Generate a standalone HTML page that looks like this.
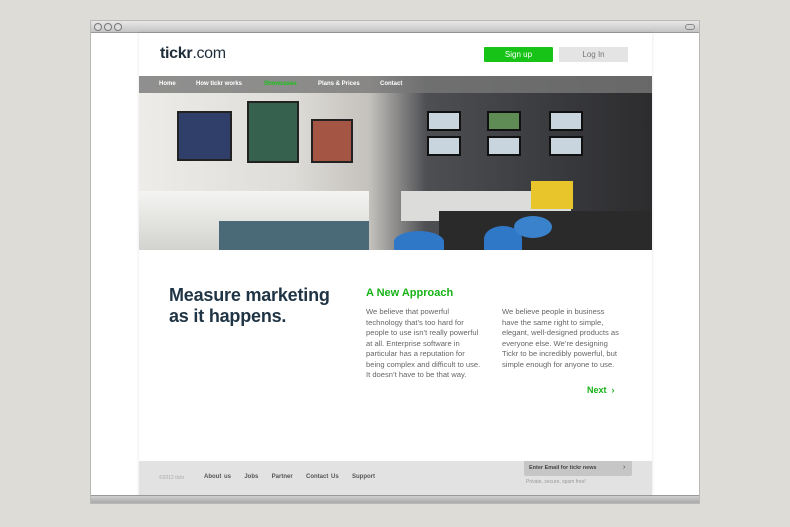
<!DOCTYPE html>
<html><head><meta charset="utf-8"><style>
*{margin:0;padding:0;box-sizing:border-box}
body{width:790px;height:527px;background:#dddcd7;position:relative;overflow:hidden;font-family:"Liberation Sans",sans-serif}
.win{position:absolute;left:90px;top:20px;width:610px;height:484px;background:#fff;border:1px solid #b8b8b4}
.title{position:absolute;left:0;top:0;width:608px;height:12px;background:linear-gradient(#e8e8e8,#c4c4c4);border-bottom:1px solid #9a9a9a}
.dot{position:absolute;top:2px;width:8px;height:8px;border-radius:50%;border:1px solid #777;background:#ddd}
.page{position:absolute;left:48px;top:12px;width:513px;height:463px;background:#fff;box-shadow:0 0 3px rgba(0,0,0,.12)}
.bottom{position:absolute;left:0;top:474px;width:608px;height:8px;background:linear-gradient(#d0d0d0,#a9a9a9);border-top:1px solid #999}
.a{position:absolute;white-space:nowrap}
</style></head><body>
<div class="win">
<div class="title"><div class="dot" style="left:3px"></div><div class="dot" style="left:13px"></div><div class="dot" style="left:23px"></div><div style="position:absolute;right:4px;top:3px;width:10px;height:6px;border:1px solid #888;border-radius:3px"></div></div>
<div class="page">
<div class="a" style="left:21px;top:12px;font-size:16px;color:#1f2d3a;letter-spacing:-.3px"><b>tickr</b>.com</div>
<div class="a" style="left:345px;top:14px;width:69px;height:15px;background:#17c317;color:#fff;font-size:8px;text-align:center;line-height:15px;border-radius:1px">Sign up</div>
<div class="a" style="left:420px;top:14px;width:69px;height:15px;background:#e4e4e4;color:#777;font-size:8px;text-align:center;line-height:15px">Log In</div>
<div class="a" style="left:0;top:43px;width:513px;height:174px;overflow:hidden;background:linear-gradient(90deg,#eeece9 0%,#dedcd8 30%,#c4c1bc 45%,#4e4f53 56%,#3a3b3f 80%,#2c2c2e 100%)">
 <div class="a" style="left:0;top:115px;width:230px;height:60px;background:linear-gradient(#f4f4f2,#d2d2cf)"></div>
 <div class="a" style="left:80px;top:145px;width:150px;height:30px;background:#4b6a78"></div>
 <div class="a" style="left:38px;top:35px;width:55px;height:50px;background:#2f3f6a;border:2px solid #222"></div>
 <div class="a" style="left:108px;top:25px;width:52px;height:62px;background:#36614f;border:2px solid #222"></div>
 <div class="a" style="left:172px;top:43px;width:42px;height:44px;background:#a55544;border:2px solid #222"></div>
 <div class="a" style="left:262px;top:115px;width:170px;height:30px;background:#dcdcda"></div>
 <div class="a" style="left:288px;top:35px;width:34px;height:20px;background:#c8d4de;border:2px solid #111"></div>
 <div class="a" style="left:348px;top:35px;width:34px;height:20px;background:#5f8b55;border:2px solid #111"></div>
 <div class="a" style="left:410px;top:35px;width:34px;height:20px;background:#c8d4de;border:2px solid #111"></div>
 <div class="a" style="left:288px;top:60px;width:34px;height:20px;background:#c8d4de;border:2px solid #111"></div>
 <div class="a" style="left:348px;top:60px;width:34px;height:20px;background:#c8d4de;border:2px solid #111"></div>
 <div class="a" style="left:410px;top:60px;width:34px;height:20px;background:#c8d4de;border:2px solid #111"></div>
 <div class="a" style="left:300px;top:135px;width:213px;height:40px;background:#2a2a2b"></div>
 <div class="a" style="left:392px;top:105px;width:42px;height:28px;background:#e8c52a"></div>
 <div class="a" style="left:255px;top:155px;width:50px;height:22px;background:#2f78c8;border-radius:50% 50% 0 0"></div>
 <div class="a" style="left:345px;top:150px;width:38px;height:26px;background:#2f78c8;border-radius:50% 50% 0 0"></div>
 <div class="a" style="left:375px;top:140px;width:38px;height:22px;background:#3a82cc;border-radius:50%"></div>
 <div class="a" style="left:0;top:0;width:513px;height:17px;background:rgba(120,120,120,.8)"></div>
 <div class="a" style="left:20px;top:5px;font-size:6px;color:#fff;font-weight:bold">Home</div>
 <div class="a" style="left:57px;top:5px;font-size:6px;color:#fff;font-weight:bold">How tickr works</div>
 <div class="a" style="left:125px;top:5px;font-size:6px;color:#17c317;font-weight:bold">Showcases</div>
 <div class="a" style="left:179px;top:5px;font-size:6px;color:#fff;font-weight:bold">Plans &amp; Prices</div>
 <div class="a" style="left:241px;top:5px;font-size:6px;color:#fff;font-weight:bold">Contact</div>
</div>
<div class="a" style="left:30px;top:252px;font-size:18px;line-height:21px;color:#1f3444;font-weight:bold;letter-spacing:-.2px">Measure marketing<br>as it happens.</div>
<div class="a" style="left:227px;top:254px;font-size:11px;color:#17b317;font-weight:bold">A New Approach</div>
<div class="a" style="left:227px;top:274px;font-size:7.6px;line-height:10.5px;color:#666">We believe that powerful<br>technology that’s too hard for<br>people to use isn’t really powerful<br>at all. Enterprise software in<br>particular has a reputation for<br>being complex and difficult to use.<br>It doesn’t have to be that way.</div>
<div class="a" style="left:363px;top:274px;font-size:7.6px;line-height:10.5px;color:#666">We believe people in business<br>have the same right to simple,<br>elegant, well-designed products as<br>everyone else. We’re designing<br>Tickr to be incredibly powerful, but<br>simple enough for anyone to use.</div>
<div class="a" style="left:448px;top:352px;font-size:9px;color:#17b317;font-weight:bold">Next &nbsp;›</div>
<div class="a" style="left:0;top:428px;width:513px;height:35px;background:#e2e2e2"></div>
<div class="a" style="left:20px;top:442px;font-size:5px;color:#aaa">©2012 tickr</div>
<div class="a" style="left:65px;top:441px;font-size:6px;color:#555;font-weight:bold;word-spacing:1px">About us &nbsp;&nbsp;&nbsp; Jobs &nbsp;&nbsp;&nbsp; Partner &nbsp;&nbsp;&nbsp; Contact Us &nbsp;&nbsp;&nbsp; Support</div>
<div class="a" style="left:385px;top:428px;width:108px;height:15px;background:#c6c6c6;border-radius:0 0 2px 2px"></div>
<div class="a" style="left:390px;top:432px;font-size:5.5px;color:#444;font-weight:bold">Enter Email for tickr news</div>
<div class="a" style="left:484px;top:431px;font-size:7px;color:#444">›</div>
<div class="a" style="left:387px;top:446px;font-size:5px;color:#999">Private, secure, spam free!</div>
</div>
<div class="bottom"></div>
</div>
</body></html>
